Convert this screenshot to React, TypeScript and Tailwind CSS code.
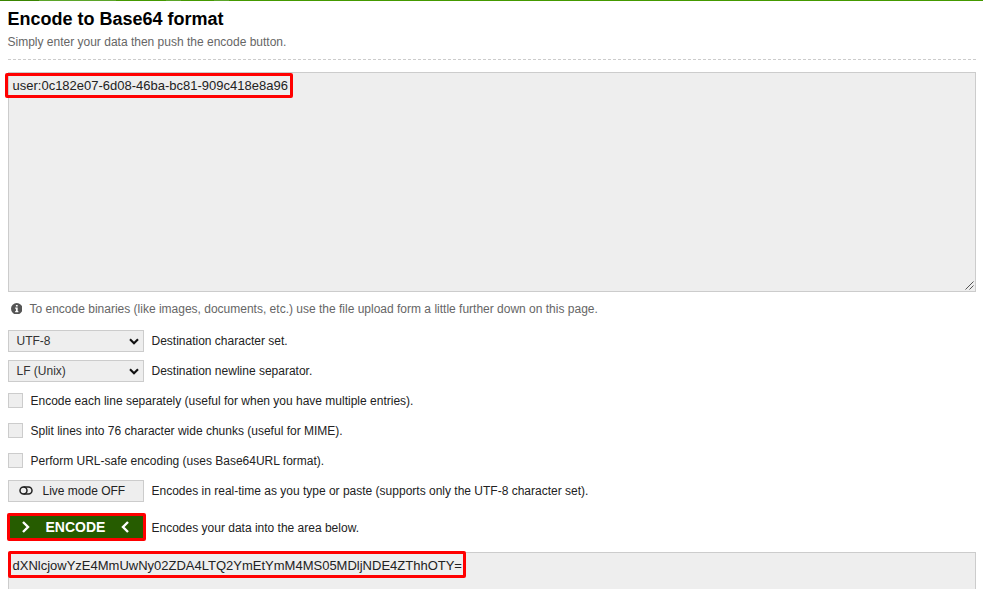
import type { ReactNode } from "react";

function Chevron({ className, d }: { className: string; d: string }) {
  return (
    <svg className={className} viewBox="0 0 10 12" fill="none" stroke="white" strokeWidth="2.4">
      <path d={d} />
    </svg>
  );
}

function Select({ value }: { value: string }) {
  return (
    <div className="flex h-[22px] w-[136px] items-center justify-between border border-[#cccccc] bg-[#eeeeee] pl-[7.5px] pr-1 text-[#333333]">
      <span>{value}</span>
      <svg className="h-[7px] w-[10px]" viewBox="0 0 10 7" fill="none" stroke="#111111" strokeWidth="2.1">
        <path d="M1 1.2 5 5.2 9 1.2" />
      </svg>
    </div>
  );
}

function Row({ control, children }: { control: ReactNode; children: ReactNode }) {
  return (
    <div className="mb-2 flex h-[22px] items-center gap-[7.5px]">
      {control}
      <span>{children}</span>
    </div>
  );
}

function CheckRow({ children }: { children: ReactNode }) {
  return (
    <div className="mb-2 flex h-[22px] items-center gap-[7.5px]">
      <span className="mb-px h-[15px] w-[15px] border border-[#cccccc] bg-[#eeeeee]" />
      <span>{children}</span>
    </div>
  );
}

export default function App() {
  return (
    <main className="h-[589px] w-[983px] overflow-hidden bg-white font-['Liberation_Sans',Arial,sans-serif] text-[12px] leading-[16px] text-[#222222] whitespace-nowrap">
      <div className="h-px bg-[linear-gradient(90deg,#398500_0_39px,#5ba529_39px_116px,#449900_116px_166px,#5ba529_166px_181px,#449900_181px_214px,#5ba529_214px_229px,#449900_229px)]" />
      <div className="pl-2 pr-[7px]">
        <h1 className="-ml-[0.5px] pt-[7px] text-[18px] font-bold leading-[22px] text-black">Encode to Base64 format</h1>
        <p className="-ml-[0.5px] mt-[4px] text-[#666666]">Simply enter your data then push the encode button.</p>
        <div className="mt-[9px] h-px bg-[repeating-linear-gradient(90deg,#cccccc_0_3px,transparent_3px_5px)]" />

        <div className="relative mt-3 h-[220px] border border-[#cccccc] bg-[#eeeeee] pl-[3.5px] pt-[5px] text-[13px] text-[#222222]">
          <span>user:0c182e07-6d08-46ba-bc81-909c418e8a96</span>
          <div className="absolute -left-1 top-0 h-[25px] w-[288px] rounded-[2px] border-[3px] border-[#ff0000]" />
          <svg className="absolute bottom-px right-px h-[9px] w-[9px]" viewBox="0 0 9 9" stroke="#555555" strokeWidth="1">
            <path d="M0.5 8.5 8.5 0.5M4.5 8.5 8.5 4.5" />
          </svg>
        </div>

        <div className="mt-[9px] flex h-4 items-center text-[#666666]">
          <svg className="mb-px ml-[2.5px] mr-[7.5px] h-[11.5px] w-[11.5px]" viewBox="0 0 11 11">
            <circle cx="5.5" cy="5.5" r="5.5" fill="#555555" />
            <path d="M4.7 1.8h1.7v1.5H4.7zM4 4.3h2.4v3.3H7v1.2H4V7.6h.7V5.5H4z" fill="white" />
          </svg>
          <span>To encode binaries (like images, documents, etc.) use the file upload form a little further down on this page.</span>
        </div>

        <div className="mt-[13px]">
          <Row control={<Select value="UTF-8" />}>Destination character set.</Row>
          <Row control={<Select value="LF (Unix)" />}>Destination newline separator.</Row>
          <CheckRow>Encode each line separately (useful for when you have multiple entries).</CheckRow>
          <CheckRow>Split lines into 76 character wide chunks (useful for MIME).</CheckRow>
          <CheckRow>Perform URL-safe encoding (uses Base64URL format).</CheckRow>
          <Row
            control={
              <div className="flex h-[22px] w-[136px] items-center border border-[#cccccc] bg-[#eeeeee] pl-[10px]">
                <svg className="mb-px mr-[9.5px] h-[9px] w-[14px]" viewBox="0 0 14 9" fill="none" stroke="#222222" strokeWidth="1.5">
                  <path d="M4.5 1H9.5a3.5 3.5 0 0 1 0 7H4.5" />
                  <circle cx="4.5" cy="4.5" r="3.5" />
                </svg>
                <span>Live mode OFF</span>
              </div>
            }
          >
            Encodes in real-time as you type or paste (supports only the UTF-8 character set).
          </Row>
        </div>

        <div className="-ml-px mt-[11px] flex h-7 items-center gap-[5.5px]">
          <div className="flex h-7 w-[139px] items-center rounded-[2px] border-[3px] border-[#ff0000] bg-[#265c00] pl-[11px] text-[14px] font-bold text-white">
            <Chevron className="h-3 w-[10px]" d="M2 1 7 6 2 11" />
            <span className="ml-[14.5px]">ENCODE</span>
            <Chevron className="ml-[15px] h-3 w-[10px]" d="M8 1 3 6 8 11" />
          </div>
          <span className="pt-px">Encodes your data into the area below.</span>
        </div>

        <div className="relative mt-[11px] h-[220px] border border-[#cccccc] bg-[#eeeeee] pl-[3.5px] pt-[5px] text-[13px] text-[#222222]">
          <span>dXNlcjowYzE4MmUwNy02ZDA4LTQ2YmEtYmM4MS05MDljNDE4ZThhOTY=</span>
          <div className="absolute -left-px -top-[2px] h-[27px] w-[458px] rounded-[2px] border-[3px] border-[#ff0000]" />
        </div>
      </div>
    </main>
  );
}
